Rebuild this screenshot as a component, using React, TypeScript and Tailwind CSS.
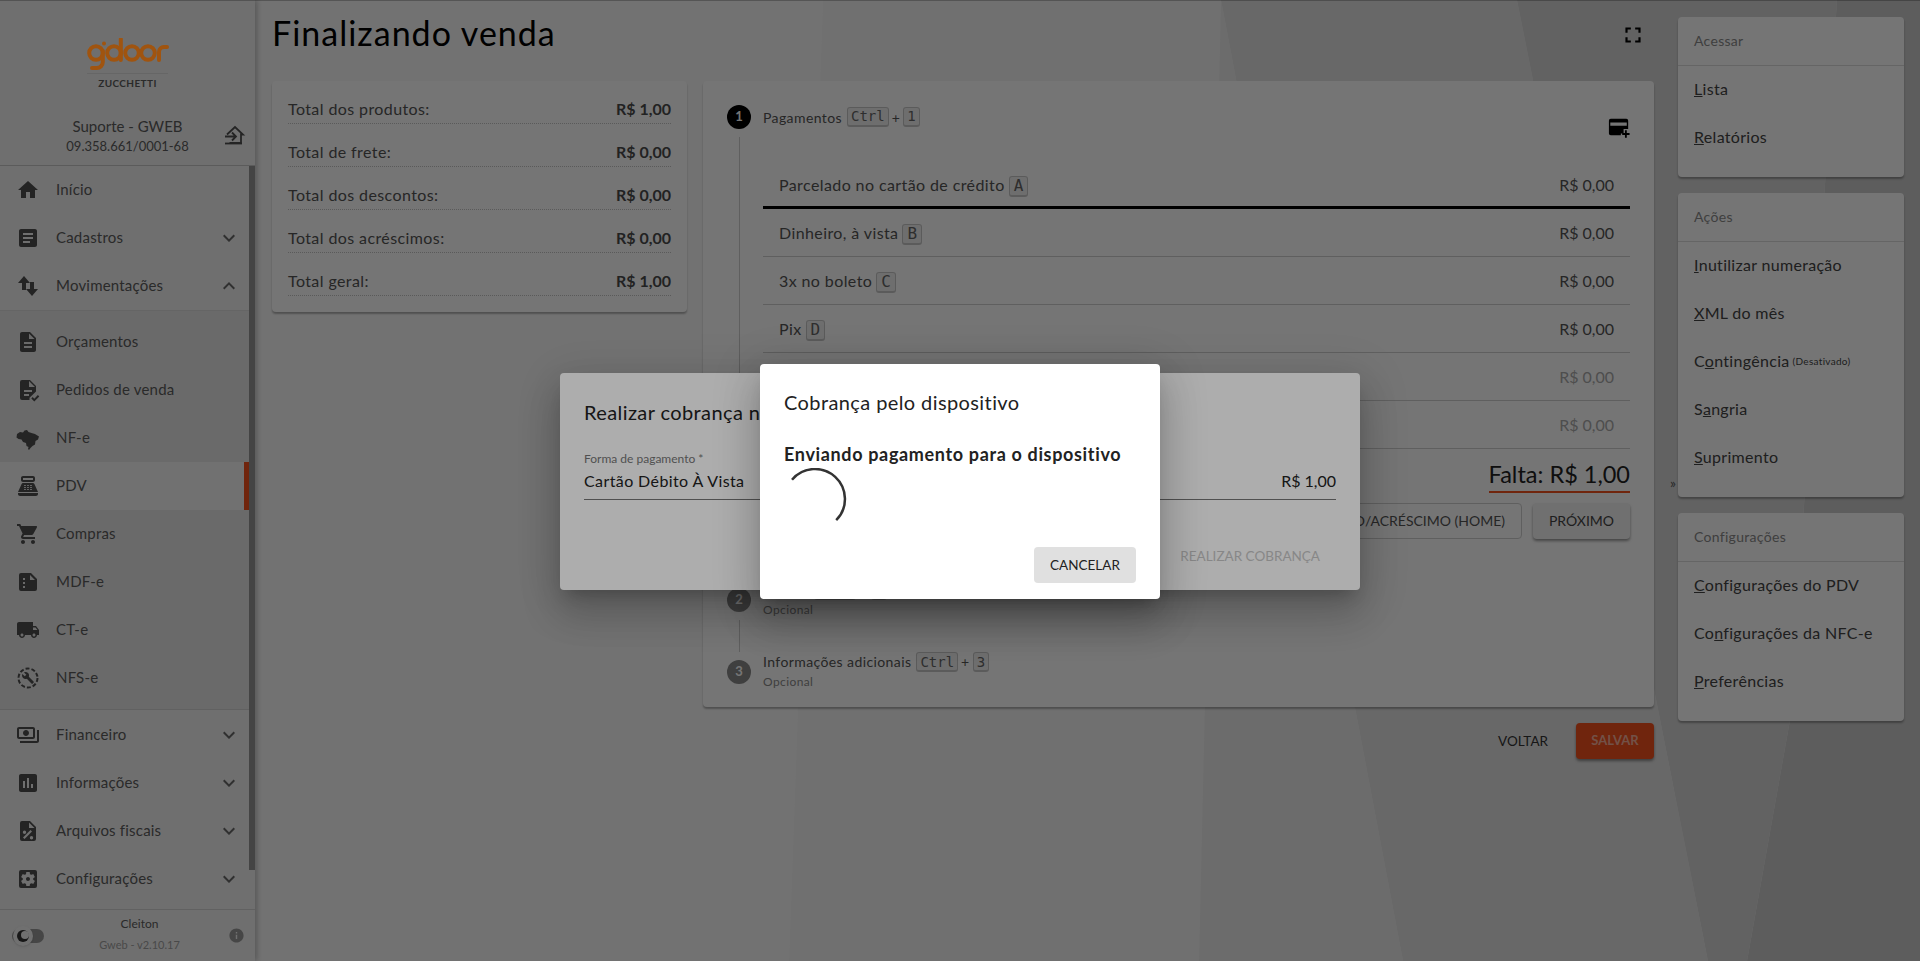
import React from 'react';
import {
  MdHome,
  MdArticle,
  MdDescription,
  MdPointOfSale,
  MdShoppingCart,
  MdLocalShipping,
  MdOutlinePayments,
  MdAssessment,
  MdSettingsApplications,
  MdExpandMore,
  MdExpandLess,
  MdFullscreen,
  MdInfo,
} from 'react-icons/md';

type IconProps = { className?: string };

const MoveIcon = ({ className }: IconProps) => (
  <svg viewBox="0 0 24 24" className={className} fill="currentColor">
    <path d="M8 2L2 9h4v7h4V9h4z" />
    <path d="M16 22l6-7h-4V8h-4v7h-4z" />
  </svg>
);

const FileCheckIcon = ({ className }: IconProps) => (
  <svg viewBox="0 0 24 24" className={className} fill="currentColor">
    <path fillRule="evenodd" d="M6 2h8l6 6v5.500l-6.500 6.300V22H6a2 2 0 0 1-2-2V4a2 2 0 0 1 2-2zm2 10v2h8v-2H8zm0 4v2h5v-2H8zm5-13v6h6l-6-6z" />
    <path d="M15.300 20.500l1.400-1.400 1.600 1.600 3.600-3.600 1.400 1.400-5 5z" />
  </svg>
);

const BrazilIcon = ({ className }: IconProps) => (
  <svg viewBox="0 0 24 24" className={className} fill="currentColor">
    <path d="M1 8l3-2 3 .5 1.500-2 2.500-.5 1.500 2 3 1 3.500 1 4 2.500-1 3-2.500 1.500-.5 3.500-2.500 1.500-2 2-1.500 2-1-1 .5-2-2-1-.5-3-3-1-1.500-2.500-3-.5-2-1.500z" />
  </svg>
);

const FileDotsIcon = ({ className }: IconProps) => (
  <svg viewBox="0 0 24 24" className={className} fill="currentColor">
    <path fillRule="evenodd" d="M5 3h10l6 6v10a2 2 0 0 1-2 2H5a2 2 0 0 1-2-2V5a2 2 0 0 1 2-2zm2 5v2h2V8H7zm0 4v2h2v-2H7zm0 4v2h2v-2H7zm7-11v5h5l-5-5z" />
  </svg>
);

const FilePercentIcon = ({ className }: IconProps) => (
  <svg viewBox="0 0 24 24" className={className} fill="currentColor">
    <path fillRule="evenodd" d="M6 2h8l6 6v12a2 2 0 0 1-2 2H6a2 2 0 0 1-2-2V4a2 2 0 0 1 2-2zm7 1.500V9h5.500L13 3.500zM14.500 11L7 18.500 8.500 20l7.500-7.500-1.500-1.500zM8.500 11.500a1.700 1.700 0 1 0 0 3.400 1.700 1.700 0 0 0 0-3.400zm7 5.500a1.700 1.700 0 1 0 0 3.400 1.700 1.700 0 0 0 0-3.400z" />
  </svg>
);

const ServiceIcon = ({ className }: IconProps) => (
  <svg viewBox="0 0 24 24" className={className} fill="none" stroke="currentColor">
    <circle cx="12" cy="12" r="9.500" strokeWidth="2" strokeDasharray="4 2" />
    <path
      transform="translate(5.500 5.500) scale(.54)"
      fill="currentColor"
      stroke="none"
      d="M22.700 19l-9.100-9.100c.9-2.300.4-5-1.500-6.900-2-2-5-2.400-7.400-1.300L9 6 6 9 1.600 4.700C.4 7.100.9 10.100 2.900 12.100c1.900 1.900 4.600 2.400 6.900 1.500l9.100 9.100c.4.400 1 .4 1.400 0l2.300-2.300c.5-.4.5-1.100.1-1.400z"
    />
  </svg>
);

const HouseArrowIcon = ({ className }: IconProps) => (
  <svg viewBox="0 0 24 24" className={className} fill="none" stroke="currentColor" strokeWidth="1.800">
    <path d="M4 11.500L12 4l8 7.500H18V20H6.500" />
    <path d="M2 20.500h17" />
    <path d="M2 13.500h10M9 9.500l4 4-4 4" />
  </svg>
);

const AddCardIcon = ({ className }: IconProps) => (
  <svg viewBox="0 0 24 24" className={className} fill="currentColor">
    <path fillRule="evenodd" d="M3 2h17a2 2 0 0 1 2 2v9h-5v5h-3v2H3a2 2 0 0 1-2-2V4a2 2 0 0 1 2-2zm-.5 4v3.500h18V6h-18z" />
    <path d="M18.500 14.500h2v3h3v2h-3v3h-2v-3h-3v-2h3z" />
  </svg>
);

const GdoorLogo = () => (
  <svg viewBox="0 0 82 32" className="h-8 w-[82px]" fill="none" stroke="#a0540f" strokeWidth="4">
    <circle cx="9" cy="15" r="6.800" />
    <path d="M15.800 13v11a6 6 0 0 1-6 6H5" strokeLinecap="round" />
    <circle cx="17" cy="5.500" r="1" strokeWidth="2" fill="#a0540f" />
    <circle cx="27" cy="15" r="6.800" />
    <path d="M33.800 1v21" strokeLinecap="round" />
    <circle cx="45" cy="15" r="6.800" />
    <circle cx="61" cy="15" r="6.800" />
    <path d="M72 22v-8a5 5 0 0 1 5-5h3" strokeLinecap="round" />
  </svg>
);

const menuTop = [
  { name: 'Início', icon: MdHome },
  { name: 'Cadastros', icon: MdArticle, chevron: 'down' },
  { name: 'Movimentações', icon: MoveIcon, chevron: 'up' },
];

const menuSub = [
  { name: 'Orçamentos', icon: MdDescription },
  { name: 'Pedidos de venda', icon: FileCheckIcon },
  { name: 'NF-e', icon: BrazilIcon },
  { name: 'PDV', icon: MdPointOfSale, active: true },
  { name: 'Compras', icon: MdShoppingCart },
  { name: 'MDF-e', icon: FileDotsIcon },
  { name: 'CT-e', icon: MdLocalShipping },
  { name: 'NFS-e', icon: ServiceIcon },
];

const menuBottom = [
  { name: 'Financeiro', icon: MdOutlinePayments, chevron: 'down' },
  { name: 'Informações', icon: MdAssessment, chevron: 'down' },
  { name: 'Arquivos fiscais', icon: FilePercentIcon, chevron: 'down' },
  { name: 'Configurações', icon: MdSettingsApplications, chevron: 'down' },
];

const totals = [
  ['Total dos produtos:', 'R$ 1,00'],
  ['Total de frete:', 'R$ 0,00'],
  ['Total dos descontos:', 'R$ 0,00'],
  ['Total dos acréscimos:', 'R$ 0,00'],
  ['Total geral:', 'R$ 1,00'],
];

const payments = [
  { name: 'Parcelado no cartão de crédito', key: 'A', selected: true },
  { name: 'Dinheiro, à vista', key: 'B' },
  { name: '3x no boleto', key: 'C' },
  { name: 'Pix', key: 'D' },
  { name: 'Cartão de débito', key: 'E', disabled: true },
  { name: 'Cartão de crédito', key: 'F', disabled: true },
];

const MenuItem = ({ item }: { item: any }) => {
  const Icon = item.icon;
  return (
    <div className={`relative flex h-12 items-center pl-4 pr-2 ${item.active ? 'bg-[#f7f7f7]' : ''}`}>
      <Icon className="h-6 w-6 shrink-0 text-[#505050]" />
      <span className="ml-4 pb-[1px] text-[15px] tracking-[0.2px] text-[#5c5c5c]">{item.name}</span>
      {item.chevron === 'down' && <MdExpandMore className="ml-auto h-6 w-6 text-[#6a6a6a]" />}
      {item.chevron === 'up' && <MdExpandLess className="ml-auto h-6 w-6 text-[#6a6a6a]" />}
      {item.active && <div className="absolute right-0 top-0 h-full w-[5px] bg-[#f4511e]" />}
    </div>
  );
};

const Sidebar = () => (
  <aside className="relative flex h-full w-[255px] shrink-0 flex-col bg-[#f2f2f2] tracking-normal shadow-[2px_0_6px_rgba(0,0,0,0.25)]">
    <div className="relative h-[166px] shrink-0 border-b border-[#c8c8c8]">
      <div className="relative z-[60] flex flex-col items-center pt-[38px]">
        <GdoorLogo />
        <div className="mt-[3px] w-[81px] border-t border-[#666] pt-[2px] text-center text-[10px] font-bold leading-[14px] tracking-[0.4px] text-[#2a2a2a]">
          ZUCCHETTI
        </div>
      </div>
      <div className="mt-[26px] text-center text-[15px] leading-[20px] text-[#5c5c5c]">Suporte - GWEB</div>
      <div className="text-center text-[13px] leading-[20px] text-[#5c5c5c]">09.358.661/0001-68</div>
      <HouseArrowIcon className="absolute left-[223px] top-[123px] h-6 w-6 text-[#505050]" />
    </div>
    <nav className="w-[249px] flex-1">
      <div className="border-b border-[#dcdcdc] shadow-[0_1px_2px_rgba(0,0,0,0.1)]">
        {menuTop.map((item) => (
          <MenuItem key={item.name} item={item} />
        ))}
      </div>
      <div className="border-b border-[#d4d4d4] bg-[#e8e8e8] py-[7px]">
        {menuSub.map((item) => (
          <MenuItem key={item.name} item={item} />
        ))}
      </div>
      <div className="pt-[1px]">
        {menuBottom.map((item) => (
          <MenuItem key={item.name} item={item} />
        ))}
      </div>
    </nav>
    <div className="absolute right-0 top-[166px] h-[704px] w-[6px] bg-[#959595]" />
    <div className="flex h-[52px] shrink-0 items-center border-t border-[#d4d4d4] pl-3 pr-[10px]">
      <div className="relative h-[14px] w-8 rounded-full bg-[#9a9a9a]">
        <div className="absolute left-[1px] top-[-3px] flex h-5 w-5 items-center justify-center rounded-full bg-[#f5f5f5] shadow">
          <div className="h-3 w-3 rounded-full bg-[#333]" />
          <div className="absolute left-[8px] top-[5px] h-2 w-2 rounded-full bg-[#f5f5f5]" />
        </div>
      </div>
      <div className="ml-[7px] flex-1 text-center">
        <div className="mb-[5px] mt-[-3px] text-[12px] leading-4 text-[#5c5c5c]">Cleiton</div>
        <div className="text-[11px] leading-4 text-[#a0a0a0]">Gweb - v2.10.17</div>
      </div>
      <MdInfo className="h-[17px] w-[17px] text-[#9a9a9a]" />
    </div>
  </aside>
);

const Kbd = ({ children, className = 'h-5 px-[3px] text-[14px]' }: { children: React.ReactNode; className?: string }) => (
  <kbd className={`inline-flex items-center rounded-[3px] border border-b-2 border-[#c8c8c8] bg-[#f0f0f0] [font-family:'DejaVu_Sans_Mono',monospace] font-normal tracking-normal text-[#666] ${className}`}>
    {children}
  </kbd>
);

const StepCircle = ({ n, active }: { n: number; active?: boolean }) => (
  <div className={`flex h-6 w-6 shrink-0 items-center justify-center rounded-full text-[13px] font-bold tracking-normal text-white ${active ? 'bg-black' : 'bg-[#8a8a8a]'}`}>
    {n}
  </div>
);

const SideCard = ({ title, items }: { title: string; items: React.ReactNode[] }) => (
  <div className="rounded bg-white pb-[15px] tracking-[0.3px] shadow-[0_2px_2px_rgba(0,0,0,0.3)]">
    <div className="flex h-[49px] items-center border-b border-[#dddddd] px-4 pb-[2px] text-[14px] text-[#8a8a8a]">{title}</div>
    {items.map((item, i) => (
      <div key={i} className="flex h-12 items-center px-4 pb-[2px] text-[16px] text-[#444]">
        {item}
      </div>
    ))}
  </div>
);

const Main = () => (
  <main className="relative flex h-full flex-1 flex-col pl-[17px] pr-4">
    <div className="flex h-[81px] shrink-0 items-start justify-between">
      <h1 className="pt-[11px] text-[34px] font-normal leading-[44px] tracking-[1px] text-black">Finalizando venda</h1>
      <MdFullscreen className="mr-2 mt-[22px] h-[26px] w-[26px] text-black" />
    </div>
    <div className="flex items-start gap-4">
      <section className="w-[415px] shrink-0 rounded bg-white px-4 pb-4 pt-[7px] shadow-[0_2px_2px_rgba(0,0,0,0.3)]">
        {totals.map(([label, value]) => (
          <div key={label} className="mb-[7px] flex h-9 items-end justify-between border-b border-dotted border-[#c4c4c4] pb-[2px] text-[16px] leading-6 text-[#555] last:mb-0">
            <span>{label}</span>
            <span className="font-bold tracking-normal text-[#4c4c4c]">{value}</span>
          </div>
        ))}
      </section>
      <section className="h-[626px] w-[951px] shrink-0 rounded bg-white px-6 pt-6 shadow-[0_2px_2px_rgba(0,0,0,0.3)]">
        <div className="flex h-6 items-center gap-3">
          <StepCircle n={1} active />
          <span className="flex items-center gap-[3px] text-[14px] text-[#555]">
            Pagamentos <Kbd className="ml-[2px] h-5 px-[3px] text-[14px]">Ctrl</Kbd> + <Kbd>1</Kbd>
          </span>
          <AddCardIcon className="ml-auto h-[22px] w-[22px] translate-y-[11px] text-black" />
        </div>
        <div className="ml-3 mt-2 h-[443px] border-l border-[#cfcfcf] pl-[23px] pt-6">
          {payments.map((p) => (
            <div
              key={p.key}
              className={`flex h-12 items-center justify-between px-4 text-[16px] ${
                p.selected ? 'border-b-[3px] border-black pt-[2px]' : 'border-b border-[#d0d0d0]'
              } ${p.disabled ? 'text-[#aaa]' : 'text-[#555]'}`}
            >
              <span className="flex items-center gap-1">
                {p.name} <Kbd className="mt-[3px] h-[21px] px-1 text-[16px]">{p.key}</Kbd>
              </span>
              <span className="tracking-normal">R$ 0,00</span>
            </div>
          ))}
          <div className="flex justify-end pt-2">
            <div className="border-b-2 border-[#f4511e] text-[23.500px] leading-[34px] tracking-normal text-[#222]">Falta: R$ 1,00</div>
          </div>
          <div className="mt-[10px] flex justify-end gap-[11px]">
            <button className="h-9 rounded border border-[#d0d0d0] px-4 pb-[2px] text-[14px] tracking-normal text-[#555]">DESCONTO/ACRÉSCIMO (HOME)</button>
            <button className="h-9 w-[97px] rounded bg-[#f5f5f5] pb-[2px] text-[14px] tracking-normal text-[#444] shadow-[0_2px_3px_rgba(0,0,0,0.4)]">PRÓXIMO</button>
          </div>
        </div>
        <div className="flex h-10 items-center gap-3">
          <StepCircle n={2} />
          <div className="text-[14px] leading-5 text-[#555]">
            <div className="flex items-center gap-[3px]">
              Cliente <Kbd className="ml-[2px] h-5 px-[3px] text-[14px]">Ctrl</Kbd> + <Kbd>2</Kbd>
            </div>
            <div className="text-[12px] text-[#8a8a8a]">Opcional</div>
          </div>
        </div>
        <div className="ml-3 h-8 border-l border-[#cfcfcf]" />
        <div className="flex h-10 items-center gap-3">
          <StepCircle n={3} />
          <div className="text-[14px] leading-5 text-[#555]">
            <div className="flex items-center gap-[3px]">
              Informações adicionais <Kbd className="ml-[2px] h-5 px-[3px] text-[14px]">Ctrl</Kbd> + <Kbd>3</Kbd>
            </div>
            <div className="text-[12px] text-[#8a8a8a]">Opcional</div>
          </div>
        </div>
      </section>
    </div>
    <div className="mt-4 flex items-center justify-end gap-[28px]">
      <span className="text-[13.500px] tracking-normal text-[#333]">VOLTAR</span>
      <button className="h-9 w-[78px] rounded bg-[#f4511e] text-[13px] font-bold tracking-normal text-[#ffffff90] shadow-[0_2px_3px_rgba(0,0,0,0.4)]">SALVAR</button>
    </div>
  </main>
);

const RightPanel = () => (
  <aside className="relative flex w-[250px] shrink-0 flex-col gap-4 pl-2 pr-4 pt-[17px]">
    <span className="absolute left-0 top-[473px] text-[14px] leading-5 text-[#555]">»</span>
    <SideCard title="Acessar" items={[<span><u>L</u>ista</span>, <span><u>R</u>elatórios</span>]} />
    <SideCard
      title="Ações"
      items={[
        <span><u>I</u>nutilizar numeração</span>,
        <span><u>X</u>ML do mês</span>,
        <span className="flex items-center gap-[3px]">
          <span>C<u>o</u>ntingência</span>
          <span className="text-[10px]">(Desativado)</span>
        </span>,
        <span>S<u>a</u>ngria</span>,
        <span><u>S</u>uprimento</span>,
      ]}
    />
    <SideCard
      title="Configurações"
      items={[
        <span><u>C</u>onfigurações do PDV</span>,
        <span>Co<u>n</u>figurações da NFC-e</span>,
        <span><u>P</u>referências</span>,
      ]}
    />
  </aside>
);

const dialogShadow =
  'shadow-[0_11px_15px_-7px_rgba(0,0,0,0.2),0_24px_38px_3px_rgba(0,0,0,0.14),0_9px_46px_8px_rgba(0,0,0,0.12)]';

export default function App() {
  return (
    <div className="relative flex h-[961px] w-[1920px] overflow-hidden bg-[#fafafa] tracking-[0.4px] [font-family:Lato,sans-serif]">
      {/* fundo decorativo */}
      <svg viewBox="0 0 1920 961" className="absolute inset-0 h-full w-full">
        <polygon points="255,0 823,0 789,961 255,961" fill="#fafafa" />
        <polygon points="823,0 1221,0 1403,961 789,961" fill="#f5f5f5" />
        <polygon points="1221,0 1403,961 1199,961" fill="#ececec" />
        <polygon points="1221,0 1517,0 1708,961 1403,961" fill="#e3e3e3" />
        <polygon points="1517,0 1837,0 1790,720 1747,961 1708,961" fill="#d6d6d6" />
        <polygon points="1837,0 1920,0 1920,961 1747,961 1790,720" fill="#cbcbcb" />
      </svg>
      <Sidebar />
      <Main />
      <RightPanel />

      {/* primeira camada */}
      <div className="absolute inset-0 z-40 bg-black/[0.32] shadow-[inset_0_1px_0_rgba(0,0,0,0.25)]" />
      <div className={`absolute left-[560px] top-[373px] z-40 flex h-[217px] w-[800px] flex-col rounded bg-white px-6 pt-[23px] ${dialogShadow}`}>
        <div className="text-[20px] leading-8 text-[#222]">Realizar cobrança no dispositivo</div>
        <div className="mt-[23px] border-b border-[#777] pb-[6px]">
          <div className="text-[12px] leading-4 tracking-normal text-[#777]">Forma de pagamento *</div>
          <div className="mt-[2px] flex justify-between text-[16px] leading-6 text-[#222]">
            <span>Cartão Débito À Vista</span>
            <span className="tracking-normal">R$ 1,00</span>
          </div>
        </div>
        <div className="mt-[38px] flex justify-end pr-4 text-[13.500px] leading-9 tracking-normal text-[#c8c8c8]">REALIZAR COBRANÇA</div>
      </div>

      {/* segunda camada */}
      <div className="absolute inset-0 z-50 bg-black/[0.32]" />
      <div className={`absolute left-[760px] top-[364px] z-50 flex h-[235px] w-[400px] flex-col rounded bg-white px-6 pt-[22px] ${dialogShadow}`}>
        <div className="text-[20px] leading-8 text-[#222]">Cobrança pelo dispositivo</div>
        <div className="mt-6 text-[18px] font-bold leading-6 tracking-[0.65px] text-[#222]">Enviando pagamento para o dispositivo</div>
        <svg viewBox="0 0 64 64" className="mt-[2px] h-16 w-16 shrink-0" fill="none" stroke="#333" strokeWidth="2.500">
          <path d="M8 11.700A30 30 0 1 1 52.200 52.200" />
        </svg>
        <div className="mt-[15px] flex justify-end">
          <button className="h-9 w-[102px] rounded bg-[#e0e0e0] text-[13.500px] tracking-normal text-[#222]">CANCELAR</button>
        </div>
      </div>
    </div>
  );
}
